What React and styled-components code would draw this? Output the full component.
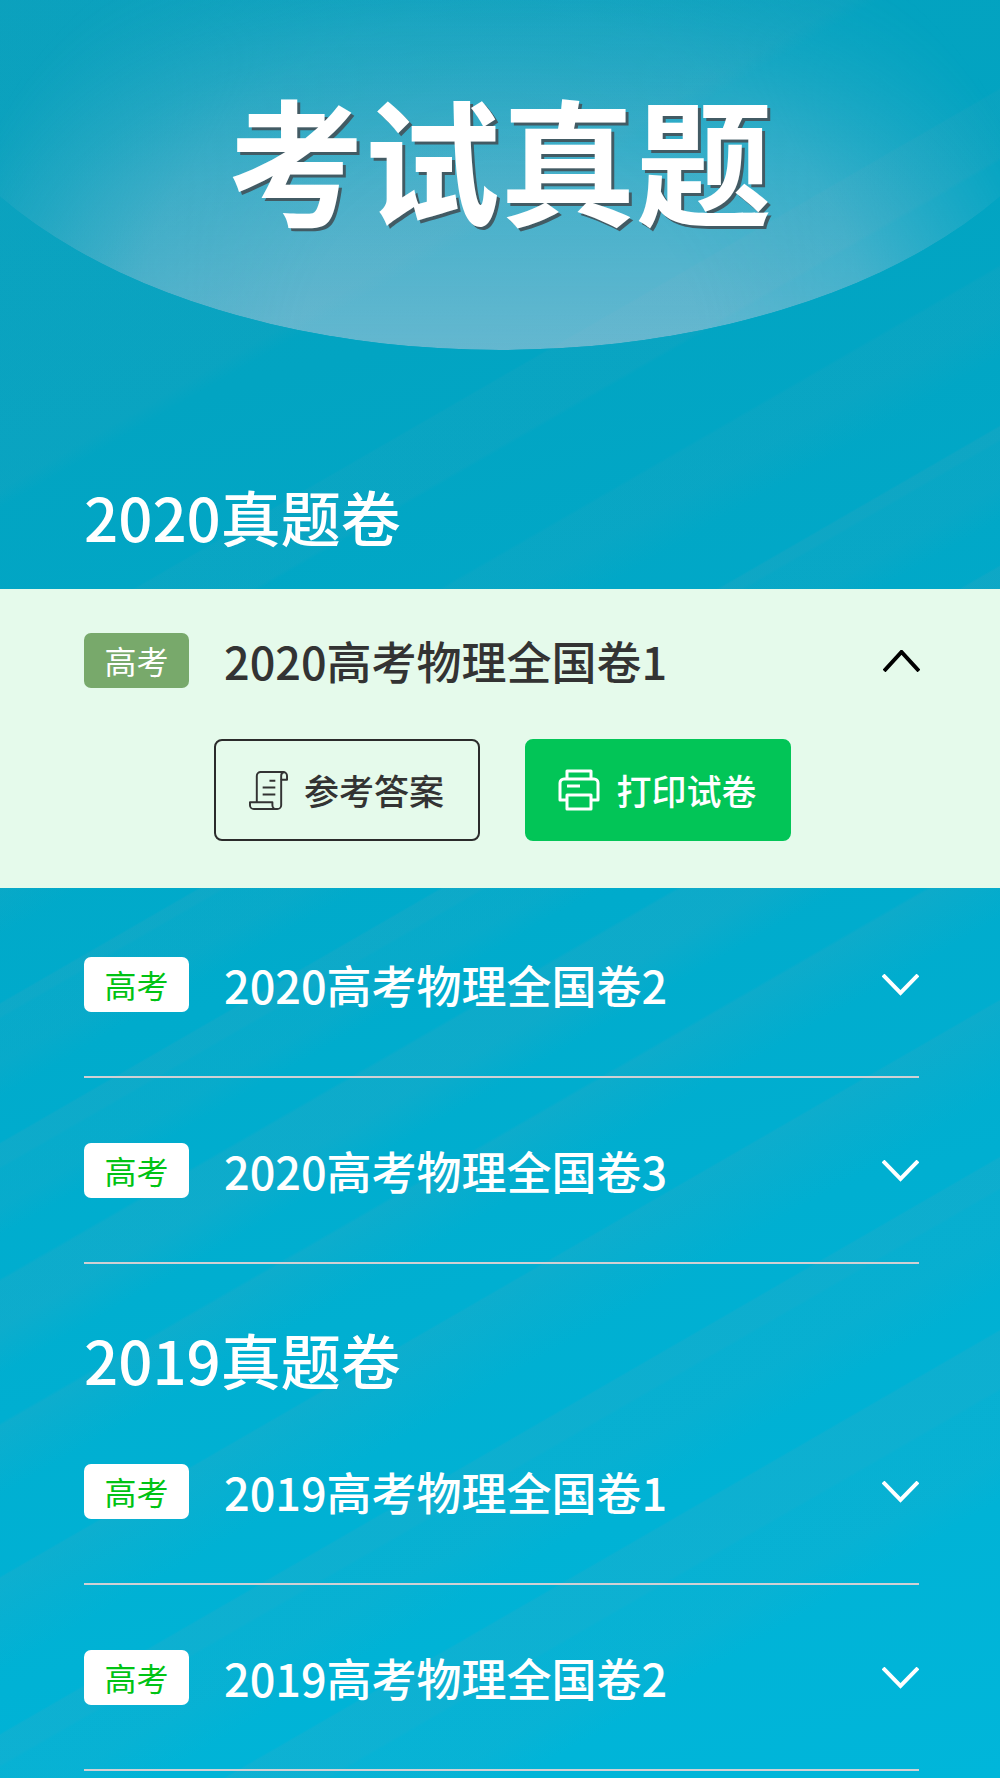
import React, { useState } from "react";
import styled, { createGlobalStyle } from "styled-components";

const GlobalStyle = createGlobalStyle`
    * {
        box-sizing: border-box;
    }

    body {
        margin: 0;
        background: #02b4d8;
        font-family: "Noto Sans CJK SC", "Noto Sans", sans-serif;
        font-weight: 500;
    }

    button {
        font: inherit;
        cursor: pointer;
    }
`;

const sections = [
    {
        year: 2020,
        papers: ["2020高考物理全国卷1", "2020高考物理全国卷2", "2020高考物理全国卷3"],
    },
    {
        year: 2019,
        papers: ["2019高考物理全国卷1", "2019高考物理全国卷2"],
    },
];

const ScrollIcon = () => (
    <Icon viewBox="0 0 40 40" $size={39} strokeWidth="2">
        <path d="M8 32V5a4 4 0 0 1 4-4h23a4 4 0 0 1 4 4v4h-6v26a4 4 0 0 1-4 4H5a4 4 0 0 1-4-4v-3h23v3a4 4 0 0 0 4 4" />
        <path d="M33 9V5a4 4 0 0 1 3-4M21 10h6M14 17h13M14 24h13" />
    </Icon>
);

const PrintIcon = () => (
    <Icon viewBox="0 0 42 42" $size={42} strokeWidth="3">
        <path d="M9 10V2h24v8" />
        <path d="M9 31H2V14a4 4 0 0 1 4-4h30a4 4 0 0 1 4 4v17h-7" />
        <path d="M9 26h24v14H9zM9 17h13" />
    </Icon>
);

const Chevron = ({ up }) => (
    <Arrow viewBox="0 0 37 22">
        <path d={up ? "M1 21 18.5 2 36 21" : "M1 1l17.5 18L36 1"} />
    </Arrow>
);

const Paper = ({ title, open, onToggle }) => (
    <PaperItem $open={open}>
        <PaperHead type="button" $open={open} aria-expanded={open} onClick={onToggle}>
            <Badge $open={open}>高考</Badge>
            <PaperTitle>{title}</PaperTitle>
            <Chevron up={open} />
        </PaperHead>
        {open && (
            <Actions>
                <ActionButton type="button">
                    <ScrollIcon />
                    参考答案
                </ActionButton>
                <ActionButton type="button" $primary>
                    <PrintIcon />
                    打印试卷
                </ActionButton>
            </Actions>
        )}
    </PaperItem>
);

const App = () => {
    const [current, setCurrent] = useState(sections[0].papers[0]);

    const toggle = title => {
        setCurrent(current === title ? null : title);
    };

    return (
        <Page>
            <GlobalStyle />
            <Hero>
                <h1>考试真题</h1>
            </Hero>
            {sections.map(section => (
                <section key={section.year}>
                    <SectionTitle>{section.year}真题卷</SectionTitle>
                    {section.papers.map(title => (
                        <Paper
                            key={title}
                            title={title}
                            open={current === title}
                            onToggle={() => toggle(title)}
                        />
                    ))}
                </section>
            ))}
        </Page>
    );
};

export default App;

const soft = "rgba(110, 160, 180, 0.07)";
const bright = "rgba(110, 160, 180, 0.12)";
const none = "rgba(110, 160, 180, 0)";

const Page = styled.main`
    min-height: 100vh;
    overflow: hidden;
    /* diagonal light bands over the blue */
    background:
        linear-gradient(
            150deg,
            ${soft} 0, ${soft} 424px,
            ${none} 440px, ${none} 576px,
            ${soft} 578px, ${soft} 636px,
            ${none} 640px, ${none} 729px,
            ${soft} 732px, ${soft} 770px,
            ${none} 810px, ${none} 868px,
            ${bright} 870px, ${bright} 880px,
            ${soft} 883px, ${soft} 920px,
            ${none} 950px, ${none} 989px,
            ${bright} 991px, ${bright} 1010px,
            ${soft} 1013px, ${soft} 1045px,
            ${none} 1070px, ${none} 1107px,
            ${bright} 1110px, ${bright} 1150px,
            ${none} 1190px, ${none} 1232px,
            ${bright} 1235px, ${soft} 1260px,
            ${none} 1295px, ${none} 1365px,
            ${bright} 1367px, ${soft} 1400px,
            ${none} 1447px, ${none} 1501px,
            ${bright} 1503px, ${bright} 1528px,
            ${soft} 1531px, ${soft} 1570px,
            ${none} 1617px, ${none} 1651px,
            ${bright} 1653px, ${bright} 1702px,
            ${soft} 1705px, ${soft} 1760px,
            ${none} 1800px
        ),
        linear-gradient(165deg, #04a1be 0%, #02a4c2 22%, #00abcc 52%, #00b6da 100%);
`;

const Hero = styled.header`
    position: relative;
    height: 421px;
    padding-top: 61px;
    text-align: center;

    /* big soft ellipse hanging from the top edge */
    &::before {
        content: "";
        position: absolute;
        top: -336px;
        left: -10%;
        width: 120%;
        height: 686px;
        border-radius: 50%;
        background: linear-gradient(
            rgba(225, 208, 225, 0.06) 48%,
            rgba(225, 208, 225, 0.3) 76%,
            rgba(225, 208, 225, 0.44) 100%
        );
        mask-image: radial-gradient(
            ellipse 47% 76% at 50% 100%,
            #000000 35%,
            rgba(0, 0, 0, 0.8) 65%,
            transparent 100%
        );
    }

    h1 {
        position: relative;
        margin: 0;
        color: #ffffff;
        font-size: 136px;
        line-height: 192px;
        font-weight: 700;
        text-shadow: 3px 3px 0 #425b64;
    }
`;

const SectionTitle = styled.h2`
    margin: 0;
    padding: 59px 84px 4px;
    color: #ffffff;
    font-size: 60px;
    line-height: 72px;
    font-weight: 500;
`;

const PaperItem = styled.article`
    margin: ${props => (props.$open ? "33px 0 4px" : "0 81px 0 84px")};
    padding: ${props => (props.$open ? "44px 80px 47px 84px" : "65px 0 64px")};
    background: ${props => (props.$open ? "#e5faeb" : "transparent")};
    border-bottom: ${props => (props.$open ? "none" : "2px solid #d0d0d4")};
`;

const PaperHead = styled.button`
    display: flex;
    align-items: center;
    width: 100%;
    height: 55px;
    padding: 0;
    border: none;
    background: none;
    color: ${props => (props.$open ? "#333333" : "#ffffff")};
    text-align: left;

    > svg {
        color: ${props => (props.$open ? "#000000" : "#ffffff")};
    }
`;

const Badge = styled.span`
    width: 105px;
    border-radius: 7px;
    background: ${props => (props.$open ? "#78a96b" : "#ffffff")};
    color: ${props => (props.$open ? "#ffffff" : "#00c314")};
    font-size: 32px;
    line-height: 55px;
    font-weight: 400;
    text-align: center;
`;

const PaperTitle = styled.span`
    flex: 1;
    margin-left: 35px;
    font-size: 45px;
    line-height: 55px;
`;

const Actions = styled.div`
    display: flex;
    justify-content: center;
    gap: 45px;
    margin-top: 51px;
`;

const ActionButton = styled.button`
    display: flex;
    justify-content: center;
    align-items: center;
    gap: 16px;
    width: 266px;
    height: 102px;
    padding: 0;
    border: 2px solid ${props => (props.$primary ? "#02c557" : "#2b2b2b")};
    border-radius: 8px;
    background: ${props => (props.$primary ? "#02c557" : "transparent")};
    color: ${props => (props.$primary ? "#ffffff" : "#333333")};
    font-size: 35px;
    line-height: 48px;
`;

const Icon = styled.svg`
    width: ${props => props.$size}px;
    height: ${props => props.$size}px;
    fill: none;
    stroke: currentColor;
    stroke-linejoin: round;
`;

const Arrow = styled.svg`
    width: 37px;
    height: 22px;
    fill: none;
    stroke: currentColor;
    stroke-width: 4;
`;
